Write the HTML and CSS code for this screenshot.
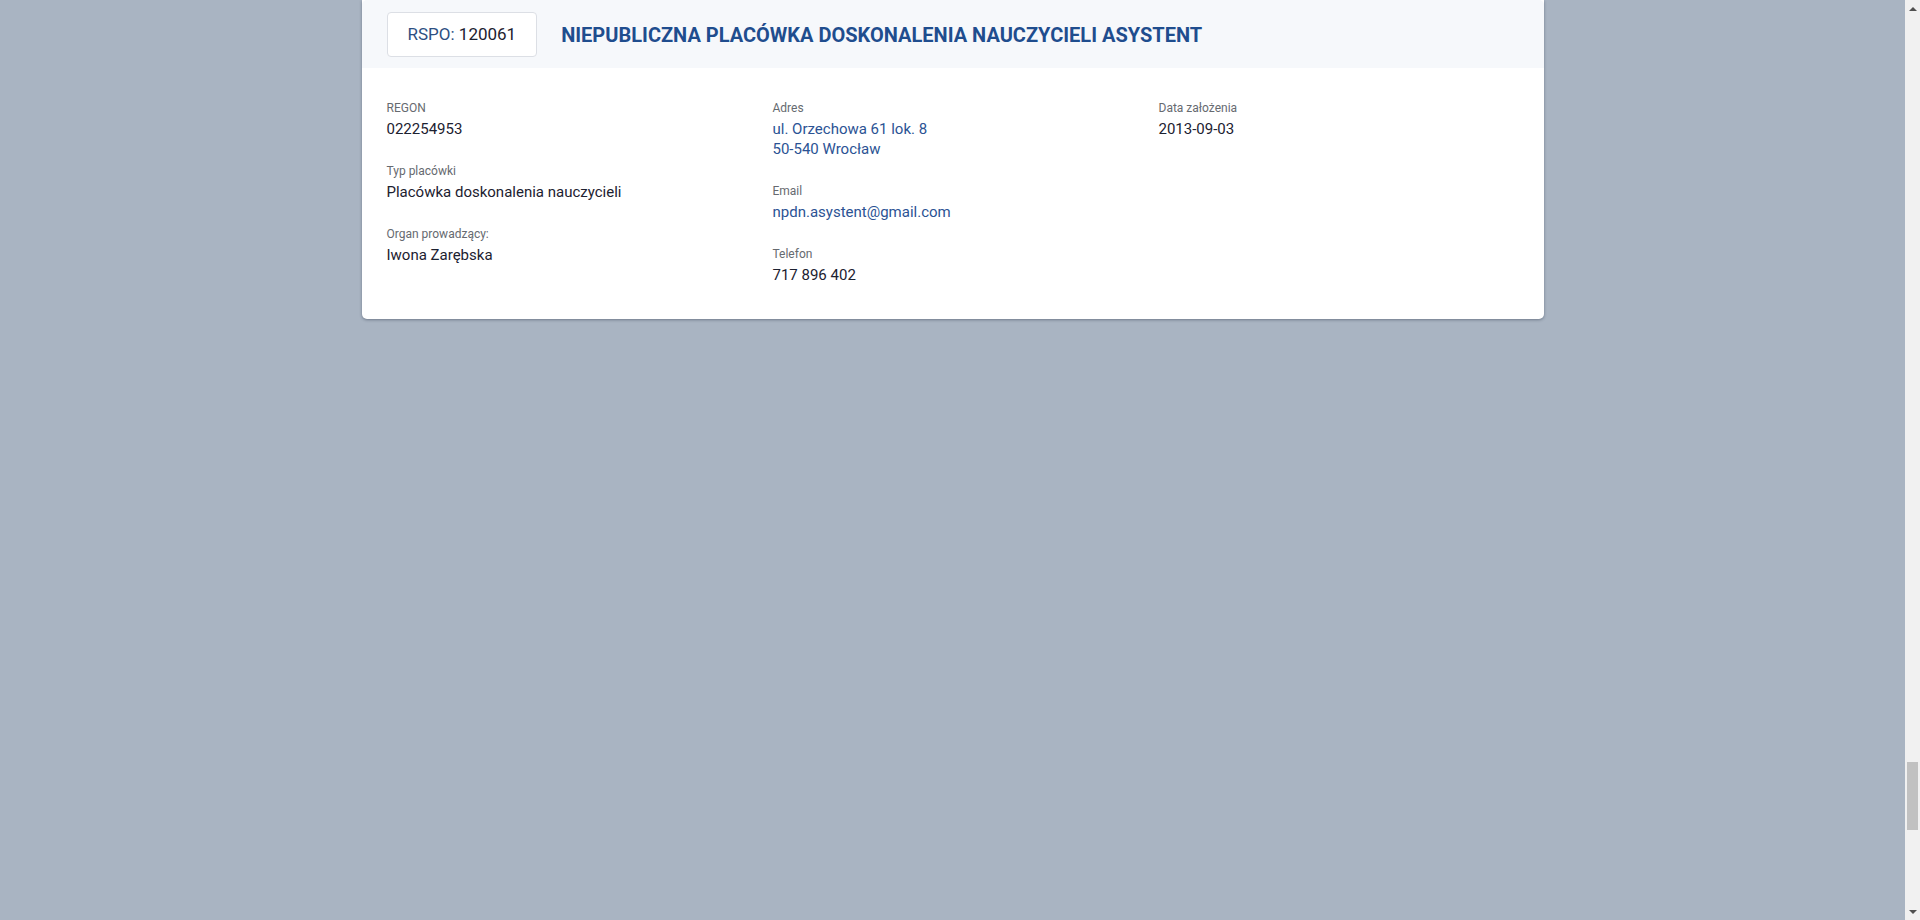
FILE: index.html
```html
<!DOCTYPE html>
<html lang="pl">
<head>
<meta charset="utf-8">
<title>Placówka</title>
<link rel="stylesheet" href="styles.css">
</head>
<body>
<div class="window">
  <main class="page">
    <article class="card">
      <header class="card-head">
        <div class="rspo"><span class="rspo-label">RSPO:</span> <span class="rspo-num">120061</span></div>
        <h2 class="title">NIEPUBLICZNA PLACÓWKA DOSKONALENIA NAUCZYCIELI ASYSTENT</h2>
      </header>
      <div class="card-body">
        <div class="col">
          <div class="field">
            <div class="label">REGON</div>
            <div class="value">022254953</div>
          </div>
          <div class="field">
            <div class="label">Typ placówki</div>
            <div class="value">Placówka doskonalenia nauczycieli</div>
          </div>
          <div class="field">
            <div class="label">Organ prowadzący:</div>
            <div class="value">Iwona Zarębska</div>
          </div>
        </div>
        <div class="col">
          <div class="field">
            <div class="label">Adres</div>
            <div class="value link">ul. Orzechowa 61 lok. 8<br>50-540 Wrocław</div>
          </div>
          <div class="field">
            <div class="label">Email</div>
            <div class="value link">npdn.asystent@gmail.com</div>
          </div>
          <div class="field">
            <div class="label">Telefon</div>
            <div class="value">717 896 402</div>
          </div>
        </div>
        <div class="col">
          <div class="field">
            <div class="label">Data założenia</div>
            <div class="value">2013-09-03</div>
          </div>
        </div>
      </div>
    </article>
  </main>
  <div class="scrollbar" aria-hidden="true">
    <div class="sb-btn"><span class="arrow-up"></span></div>
    <div class="sb-track">
      <div class="sb-thumb" style="margin-top: 745px; height: 68px;"></div>
    </div>
    <div class="sb-btn"><span class="arrow-down"></span></div>
  </div>
</div>
</body>
</html>
```
FILE: styles.css
```css
html, body {
  margin: 0;
  height: 100%;
  overflow: hidden;
}
body {
  font-family: Roboto, "Liberation Sans", sans-serif;
  background: #a9b4c2;
  color: #1c2130;
}
.window {
  display: flex;
  height: 920px;
}
.page {
  flex: 1;
  display: flex;
  justify-content: center;
  align-items: flex-start;
}
.card {
  width: 1182px;
  background: #ffffff;
  border-radius: 0 0 5px 5px;
  box-shadow: 0 1px 3px rgba(40, 50, 70, 0.45);
  overflow: hidden;
}
.card-head {
  height: 68px;
  box-sizing: border-box;
  background: #f6f8fb;
  display: flex;
  align-items: center;
  gap: 24px;
  padding: 0 25px;
  border-radius: 5px 5px 0 0;
}
.rspo {
  background: #ffffff;
  border: 1px solid #dcdfe5;
  border-radius: 4px;
  padding: 10px 20px 10px 20px;
  line-height: 23px;
  font-size: 17px;
  white-space: nowrap;
  margin-top: 1px;
}
.rspo-label {
  color: #2d4f82;
}
.rspo-num {
  color: #1c2130;
}
.title {
  margin: 2px 0 0;
  font-size: 20px;
  font-weight: 700;
  color: #1f4d8e;
  line-height: 26px;
}
.card-body {
  display: grid;
  grid-template-columns: repeat(3, 386px);
  padding: 31px 0 11px 25px;
}
.field {
  margin-bottom: 23px;
}
.label {
  font-size: 12px;
  line-height: 18px;
  color: #666a70;
  margin-bottom: 2px;
}
.value {
  font-size: 15px;
  line-height: 20px;
  color: #1c2130;
}
.value.link {
  color: #2b5394;
}
.scrollbar {
  width: 15px;
  flex: none;
  background: #f1f1f1;
  display: flex;
  flex-direction: column;
}
.sb-btn {
  height: 17px;
  display: flex;
  align-items: center;
  justify-content: center;
}
.arrow-up {
  width: 0;
  height: 0;
  border-left: 4px solid transparent;
  border-right: 4px solid transparent;
  border-bottom: 4px solid #505050;
}
.arrow-down {
  width: 0;
  height: 0;
  border-left: 4px solid transparent;
  border-right: 4px solid transparent;
  border-top: 4px solid #505050;
}
.sb-track {
  flex: 1;
  display: flex;
  flex-direction: column;
  align-items: center;
}
.sb-thumb {
  width: 11px;
  background: #c1c1c1;
}
```
